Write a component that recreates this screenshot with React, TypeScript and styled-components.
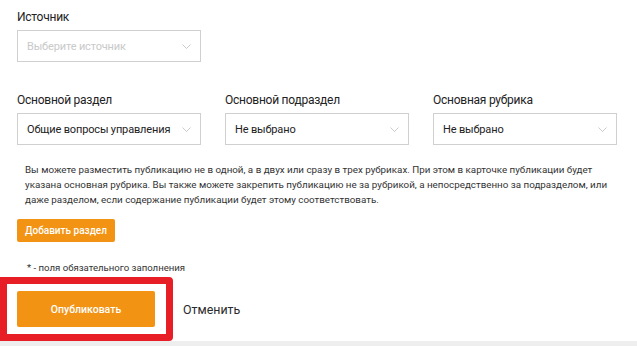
import styled, { createGlobalStyle } from "styled-components";

const GlobalStyle = createGlobalStyle`
  body {
    margin: 0;
    background: #ffffff;
    font-family: Roboto, "Noto Sans", sans-serif;
    color: #222222;
  }
`;

const Page = styled.div`
  width: 637px;
  height: 346px;
  display: flex;
  flex-direction: column;
  overflow: hidden;
`;

const Form = styled.div`
  flex: 1;
  padding: 9px 21px 0 17px;
  display: flex;
  flex-direction: column;
`;

const Field = styled.div<{ $width?: number }>`
  display: flex;
  flex-direction: column;
  width: ${(p) => (p.$width ? `${p.$width}px` : "auto")};
`;

const Label = styled.div`
  font-size: 12px;
  line-height: 16px;
  letter-spacing: -0.25px;
  color: #222222;
  margin-bottom: 5px;
`;

const Select = styled.div<{ $placeholder?: boolean }>`
  height: 32px;
  box-sizing: border-box;
  border: 1px solid #d0d0d0;
  display: flex;
  align-items: center;
  justify-content: space-between;
  padding: 0 9px 0 9px;
  font-size: 11px;
  letter-spacing: -0.15px;
  color: ${(p) => (p.$placeholder ? "#c9c9c9" : "#222222")};
  white-space: nowrap;
`;

const Row = styled.div`
  display: grid;
  grid-template-columns: 184px 184px 184px;
  column-gap: 24px;
  margin-top: 30px;
`;

const Hint = styled.p`
  margin: 17px 0 0 8px;
  font-size: 9.8px;
  line-height: 15px;
  color: #333333;
`;

const SmallButton = styled.button`
  align-self: flex-start;
  margin-top: 12px;
  height: 23px;
  padding: 0 8px;
  border: none;
  border-radius: 2px;
  background: #f39313;
  color: #ffffff;
  font-family: inherit;
  font-size: 10px;
  font-weight: 500;
`;

const Note = styled.div`
  margin: 20px 0 0 10px;
  font-size: 9.6px;
  line-height: 12px;
  color: #333333;
`;

const Actions = styled.div`
  position: relative;
  display: flex;
  align-items: center;
  gap: 28px;
  margin-top: 17px;
`;

const PublishButton = styled.button`
  width: 138px;
  height: 36px;
  border: none;
  border-radius: 2px;
  background: #f39313;
  color: #ffffff;
  font-family: inherit;
  font-size: 10.5px;
  font-weight: 500;
`;

const CancelLink = styled.span`
  font-size: 12.4px;
  color: #2a2a2a;
`;

const Highlight = styled.div`
  position: absolute;
  left: -17px;
  top: -14px;
  width: 173px;
  height: 64px;
  box-sizing: border-box;
  border: 7px solid #e81e26;
  border-radius: 0 4px 4px 0;
  pointer-events: none;
`;

const Footer = styled.div`
  height: 5px;
  background: #eeeeee;
`;

function Chevron() {
  return (
    <svg width="9" height="5" viewBox="0 0 9 5" fill="none">
      <path d="M0.5 0.5 L4.5 4.5 L8.5 0.5" stroke="#c4c4c4" strokeWidth="0.9" />
    </svg>
  );
}

function App() {
  return (
    <Page>
      <GlobalStyle />
      <Form>
        <Field $width={184}>
          <Label>Источник</Label>
          <Select $placeholder>
            Выберите источник
            <Chevron />
          </Select>
        </Field>
        <Row>
          <Field>
            <Label>Основной раздел</Label>
            <Select>
              Общие вопросы управления
              <Chevron />
            </Select>
          </Field>
          <Field>
            <Label>Основной подраздел</Label>
            <Select>
              Не выбрано
              <Chevron />
            </Select>
          </Field>
          <Field>
            <Label>Основная рубрика</Label>
            <Select>
              Не выбрано
              <Chevron />
            </Select>
          </Field>
        </Row>
        <Hint>
          Вы можете разместить публикацию не в одной, а в двух или сразу в трех рубриках. При этом в карточке публикации будет
          указана основная рубрика. Вы также можете закрепить публикацию не за рубрикой, а непосредственно за подразделом, или
          даже разделом, если содержание публикации будет этому соответствовать.
        </Hint>
        <SmallButton>Добавить раздел</SmallButton>
        <Note>* - поля обязательного заполнения</Note>
        <Actions>
          <PublishButton>Опубликовать</PublishButton>
          <CancelLink>Отменить</CancelLink>
          <Highlight />
        </Actions>
      </Form>
      <Footer />
    </Page>
  );
}

export default App;
